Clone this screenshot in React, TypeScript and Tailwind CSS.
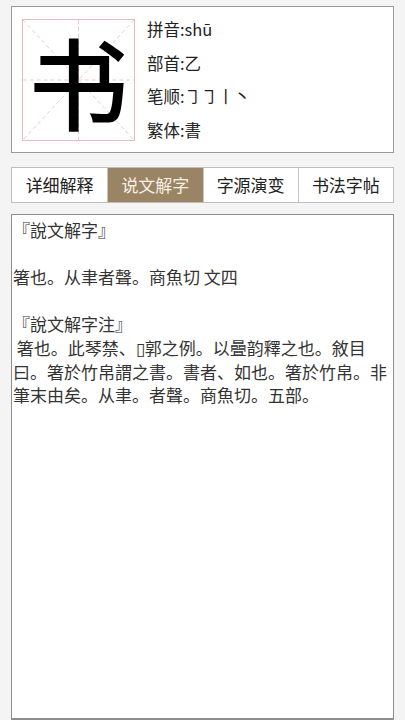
import React, { useState } from 'react';

const TABS = ['详细解释', '说文解字', '字源演变', '书法字帖'];

const INFO = [
  { label: '拼音', value: 'shū' },
  { label: '部首', value: '乙' },
  { label: '笔顺', value: '㇆㇆丨丶' },
  { label: '繁体', value: '書' },
];

function GridBox({ char }: { char: string }) {
  return (
    <div className="relative h-[122px] w-[113px] shrink-0 border border-[#e9b9bd]">
      <svg className="absolute inset-0 h-full w-full" viewBox="0 0 113 122" preserveAspectRatio="none">
        <g stroke="#efc6c9" strokeWidth="1" strokeDasharray="4 3" fill="none">
          <line x1="56.5" y1="0" x2="56.5" y2="122" />
          <line x1="0" y1="61" x2="113" y2="61" />
          <line x1="0" y1="0" x2="113" y2="122" />
          <line x1="113" y1="0" x2="0" y2="122" />
        </g>
      </svg>
      <div className="relative flex h-full w-full items-center justify-center text-[100px] font-medium leading-none text-black [font-family:'Noto_Sans_CJK_SC',sans-serif]">
        {char}
      </div>
    </div>
  );
}

export default function App() {
  const [active, setActive] = useState(1);

  return (
    <div className="flex h-[720px] flex-col overflow-hidden bg-[#f4f4f4] px-[11px] pt-[6px] [font-family:'Noto_Sans_CJK_SC',sans-serif]">
      <div className="flex h-[147px] shrink-0 items-start border border-[#9a9a9a] bg-white pl-[10px] pt-[12px]">
        <GridBox char="书" />
        <div className="ml-[12px] flex flex-col">
          {INFO.map((row) => (
            <div key={row.label} className="h-[33.5px] text-[16.5px] leading-[20px] text-[#222]">
              {row.label}:{row.value}
            </div>
          ))}
        </div>
      </div>

      <div className="mt-[14px] grid h-[36px] shrink-0 grid-cols-4 border border-[#bdbdbd] bg-white">
        {TABS.map((t, i) => (
          <button
            key={t}
            onClick={() => setActive(i)}
            className={
              'flex items-center justify-center text-[17px] ' +
              (i > 0 ? 'border-l border-[#c4c4c4] ' : '') +
              (i === active ? 'bg-[#9b8463] text-[#f6f1e8]' : 'text-[#222]')
            }
          >
            {t}
          </button>
        ))}
      </div>

      <div className="mt-[11px] flex-1 border border-b-2 border-[#8e8e8e] bg-white px-[1px] pt-[3px] text-[17px] leading-[23.6px] text-[#333]">
        <p>『說文解字』</p>
        <p>&nbsp;</p>
        <p>箸也。从聿者聲。商魚切 文四</p>
        <p>&nbsp;</p>
        <p>『說文解字注』</p>
        <p>&nbsp;箸也。此琴禁、▯郭之例。以曡韵釋之也。敘目曰。箸於竹帛謂之書。書者、如也。箸於竹帛。非筆末由矣。从聿。者聲。商魚切。五部。</p>
      </div>
    </div>
  );
}
